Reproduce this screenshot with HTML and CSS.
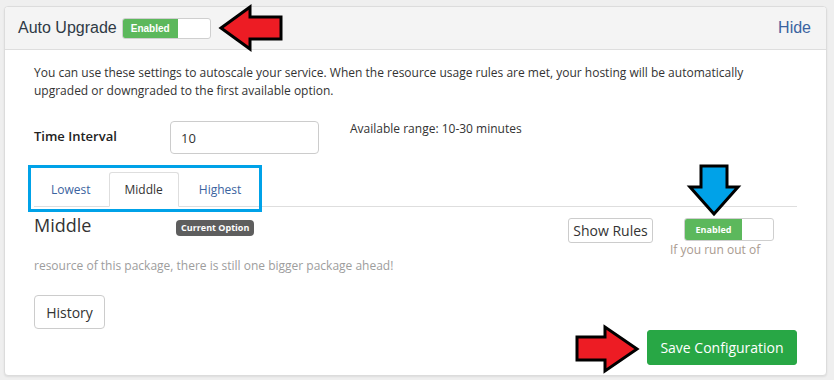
FILE: index.html
```html
<!DOCTYPE html>
<html>
<head>
<meta charset="utf-8">
<link rel="stylesheet" href="styles.css">
</head>
<body>
<div class="panel">
  <div class="panel-head">
    <span class="title">Auto Upgrade</span>
    <span class="toggle toggle-head"><span class="toggle-on">Enabled</span></span>
    <a class="hide">Hide</a>
  </div>
  <div class="panel-body">
    <p class="intro">You can use these settings to autoscale your service. When the resource usage rules are met, your hosting will be automatically upgraded or downgraded to the first available option.</p>
    <div class="interval-row">
      <label class="interval-label">Time Interval</label>
      <input class="interval-input" type="text" value="10">
      <span class="range">Available range: 10-30 minutes</span>
    </div>
    <ul class="tabs">
      <li class="tab">Lowest</li>
      <li class="tab active">Middle</li>
      <li class="tab">Highest</li>
    </ul>
    <div class="option-row">
      <h3 class="option-name">Middle</h3>
      <span class="badge">Current Option</span>
      <span class="spacer"></span>
      <button class="btn btn-rules">Show Rules</button>
      <div class="option-switch">
        <span class="toggle toggle-opt"><span class="toggle-on">Enabled</span></span>
        <span class="help">If you run out of</span>
      </div>
    </div>
    <p class="help-more">resource of this package, there is still one bigger package ahead!</p>
    <button class="btn btn-history">History</button>
    <div class="save-row">
      <button class="btn btn-save">Save Configuration</button>
    </div>
  </div>
</div>

<div class="highlight"></div>
<svg class="arrow arrow-top" width="834" height="380" viewBox="0 0 834 380">
  <polygon points="221,28 250,7 250,17 281,17 281,39 250,39 250,49" />
</svg>
<svg class="arrow arrow-blue" width="834" height="380" viewBox="0 0 834 380">
  <polygon points="714,214 690,187 701,187 701,166 727,166 727,187 738,187" />
</svg>
<svg class="arrow arrow-save" width="834" height="380" viewBox="0 0 834 380">
  <polygon points="637,349 605,327 605,337 577,337 577,360 605,360 605,371" />
</svg>
</body>
</html>
```
FILE: styles.css
```css
html, body {
  margin: 0;
  padding: 0;
}
body {
  background: #efefef;
  width: 834px;
  height: 380px;
  overflow: hidden;
  position: relative;
  font-family: "Open Sans", "Liberation Sans", sans-serif;
  color: #333;
}
.panel {
  margin: 6px 0 0 4px;
  width: 823px;
  height: 370px;
  box-sizing: border-box;
  background: #fff;
  border: 1px solid #dcdcdc;
  border-radius: 4px;
  box-shadow: 0 1px 2px rgba(0,0,0,0.08);
  overflow: hidden;
}
.panel-head {
  height: 42px;
  background: #f4f4f4;
  border-bottom: 1px solid #dedede;
  display: flex;
  align-items: center;
  padding: 0 15px 0 13px;
}
.title {
  font-family: "Liberation Sans", Arial, sans-serif;
  font-size: 16px;
  color: #2f3a45;
}
.toggle {
  display: inline-flex;
  box-sizing: border-box;
  border: 1px solid #cfcfcf;
  border-radius: 3px;
  background: #fff;
  overflow: hidden;
}
.toggle-on {
  background: #5cb85c;
  color: #fff;
  font-weight: bold;
  font-size: 9px;
  display: flex;
  align-items: center;
  justify-content: center;
}
.toggle-head {
  width: 89px;
  height: 21px;
  margin-left: 5px;
}
.toggle-head .toggle-on {
  width: 55px;
  font-family: "Liberation Sans", Arial, sans-serif;
  font-size: 10px;
}
.hide {
  margin-left: auto;
  font-family: "Liberation Sans", Arial, sans-serif;
  font-size: 16px;
  color: #3a63a0;
}
.panel-body {
  padding: 14px 29px 0 29px;
}
.intro {
  margin: 0;
  font-size: 12px;
  line-height: 18px;
  color: #333;
}
.interval-row {
  display: flex;
  align-items: flex-start;
  margin-top: 21px;
}
.interval-label {
  width: 136px;
  font-weight: 600;
  font-size: 13px;
  line-height: 31px;
  color: #222;
}
.interval-input {
  width: 149px;
  height: 33px;
  box-sizing: border-box;
  border: 1px solid #ccc;
  border-radius: 4px;
  padding: 0 10px;
  font-family: "Open Sans", sans-serif;
  font-size: 13px;
  color: #333;
  margin: 0;
}
.range {
  margin-left: 31px;
  font-size: 12px;
  line-height: 18px;
  margin-top: -1px;
  color: #333;
}
.tabs {
  list-style: none;
  margin: 18px 0 0 0;
  padding: 0;
  display: flex;
  border-bottom: 1px solid #dedede;
  height: 34px;
}
.tab {
  box-sizing: border-box;
  height: 35px;
  padding: 0 17px 0 16px;
  border: 1px solid transparent;
  border-radius: 3px 3px 0 0;
  font-size: 12px;
  line-height: 33px;
  color: #3a63a0;
}
.tab.active {
  border-color: #dedede;
  border-bottom-color: #fff;
  background: #fff;
  color: #333;
  padding: 0 15px;
}
.tab.active + .tab {
  padding: 0 16px 0 19px;
}
.option-row {
  display: flex;
  align-items: flex-start;
  margin-top: 11px;
}
.option-name {
  margin: -3px 0 0 0;
  width: 142px;
  font-weight: normal;
  font-size: 18px;
  line-height: 20px;
  color: #333;
}
.badge {
  margin-top: 2px;
  height: 16px;
  line-height: 16px;
  padding: 0 5px;
  background: #5e5e5e;
  color: #fff;
  font-weight: bold;
  font-size: 9px;
  border-radius: 4px;
}
.spacer {
  flex: 1;
}
.btn {
  font-family: "Open Sans", sans-serif;
  background: #fff;
  border: 1px solid #ccc;
  border-radius: 4px;
  color: #333;
  font-size: 14px;
  margin: 0;
  box-sizing: border-box;
  padding: 0;
}
.btn-rules {
  width: 85px;
  height: 25px;
  border-radius: 3px;
}
.option-switch {
  display: flex;
  flex-direction: column;
  margin-left: 17px;
  margin-right: 23px;
  width: 104px;
}
.toggle-opt {
  width: 90px;
  height: 23px;
  margin-left: 14px;
}
.toggle-opt .toggle-on {
  width: 57px;
}
.help {
  font-size: 12px;
  line-height: 17px;
  color: #a99a8f;
}
.help-more {
  margin: -1px 0 0 0;
  font-size: 12px;
  line-height: 17px;
  color: #9d9d9d;
}
.btn-history {
  display: block;
  margin-top: 21px;
  width: 71px;
  height: 34px;
}
.save-row {
  display: flex;
  justify-content: flex-end;
  margin-top: 1px;
}
.btn-save {
  width: 150px;
  height: 35px;
  background: #28a745;
  border-color: #28a745;
  color: #fff;
  border-radius: 3px;
}
.highlight {
  position: absolute;
  left: 28px;
  top: 165px;
  width: 234px;
  height: 47px;
  box-sizing: border-box;
  border: 3px solid #00a2e8;
}
.arrow {
  position: absolute;
  left: 0;
  top: 0;
  pointer-events: none;
}
.arrow polygon {
  stroke: #000;
  stroke-width: 3;
  stroke-linejoin: miter;
}
.arrow-top polygon,
.arrow-save polygon {
  fill: #ed1c24;
}
.arrow-blue polygon {
  fill: #00a2e8;
}
```
